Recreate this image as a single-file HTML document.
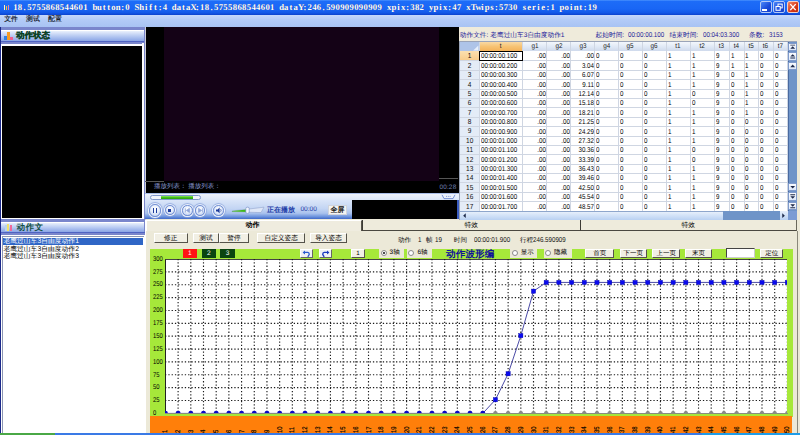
<!DOCTYPE html><html><head><meta charset="utf-8"><title>ui</title><style>
*{box-sizing:border-box;margin:0;padding:0}
html,body{width:800px;height:435px;overflow:hidden;background:#ece9d8}
body{font-family:"Liberation Sans",sans-serif;font-size:6.2px;color:#000;position:relative;text-rendering:geometricPrecision}
.a{position:absolute}
.t{position:absolute;white-space:nowrap;line-height:1}
.btn{position:absolute;background:#f1efe4;border:0.6px solid #fff;border-right-color:#55534a;border-bottom-color:#55534a;font-size:6.7px;text-align:center;white-space:nowrap;overflow:hidden}
.cell{position:absolute;white-space:nowrap;line-height:9.4px;height:9.4px;font-size:7px;color:#000;transform:scaleX(.885);transform-origin:0 0}
.cr{transform-origin:100% 0;text-align:right;padding-right:1.3px}
.rh{position:absolute;left:0;width:19.3px;text-align:center;line-height:9.6px;height:9.4px;font-size:7.2px;color:#111;transform:scaleX(.9)}
.ch{position:absolute;top:1px;height:9px;line-height:8.8px;text-align:center;font-size:7px;color:#222;transform:scaleX(.9)}
.radio{position:absolute;width:6px;height:6px;border-radius:50%;background:#fff;border:0.6px solid #8a8a8a}
</style></head><body>
<div class="a" style="left:0;top:0;width:800px;height:14.6px;background:linear-gradient(#4a92fd 0,#1d6cf8 10%,#1966f5 60%,#1258e8 85%,#0b42ce 100%)"></div>
<div class="a" style="left:4.2px;top:4.5px;width:1.2px;height:5.5px;background:#fff3c0"></div>
<div class="a" style="left:6px;top:5.5px;width:1.4px;height:4.5px;background:#f0c040"></div>
<div class="a" style="left:8.2px;top:4.5px;width:1.3px;height:5.5px;background:#f08898"></div>
<div class="a" style="left:13px;top:2.6px;height:9px;white-space:nowrap;font-family:'Liberation Serif',serif;font-weight:bold;font-size:8.8px;line-height:9px;color:#fff;text-shadow:0.4px 0.4px 0 #163c96"><span style="display:inline-block;width:4.68px;text-align:center">1</span><span style="display:inline-block;width:4.68px;text-align:center">8</span><span style="display:inline-block;width:4.68px;text-align:center">.</span><span style="display:inline-block;width:4.68px;text-align:center">5</span><span style="display:inline-block;width:4.68px;text-align:center">7</span><span style="display:inline-block;width:4.68px;text-align:center">5</span><span style="display:inline-block;width:4.68px;text-align:center">5</span><span style="display:inline-block;width:4.68px;text-align:center">8</span><span style="display:inline-block;width:4.68px;text-align:center">6</span><span style="display:inline-block;width:4.68px;text-align:center">8</span><span style="display:inline-block;width:4.68px;text-align:center">5</span><span style="display:inline-block;width:4.68px;text-align:center">4</span><span style="display:inline-block;width:4.68px;text-align:center">4</span><span style="display:inline-block;width:4.68px;text-align:center">6</span><span style="display:inline-block;width:4.68px;text-align:center">0</span><span style="display:inline-block;width:4.68px;text-align:center">1</span><span style="display:inline-block;width:4.68px;text-align:center">&nbsp;</span><span style="display:inline-block;width:4.68px;text-align:center">b</span><span style="display:inline-block;width:4.68px;text-align:center">u</span><span style="display:inline-block;width:4.68px;text-align:center">t</span><span style="display:inline-block;width:4.68px;text-align:center">t</span><span style="display:inline-block;width:4.68px;text-align:center">o</span><span style="display:inline-block;width:4.68px;text-align:center">n</span><span style="display:inline-block;width:4.68px;text-align:center">:</span><span style="display:inline-block;width:4.68px;text-align:center">0</span><span style="display:inline-block;width:4.68px;text-align:center">&nbsp;</span><span style="display:inline-block;width:4.68px;text-align:center">S</span><span style="display:inline-block;width:4.68px;text-align:center">h</span><span style="display:inline-block;width:4.68px;text-align:center">i</span><span style="display:inline-block;width:4.68px;text-align:center">f</span><span style="display:inline-block;width:4.68px;text-align:center">t</span><span style="display:inline-block;width:4.68px;text-align:center">:</span><span style="display:inline-block;width:4.68px;text-align:center">4</span><span style="display:inline-block;width:4.68px;text-align:center">&nbsp;</span><span style="display:inline-block;width:4.68px;text-align:center">d</span><span style="display:inline-block;width:4.68px;text-align:center">a</span><span style="display:inline-block;width:4.68px;text-align:center">t</span><span style="display:inline-block;width:4.68px;text-align:center">a</span><span style="display:inline-block;width:4.68px;text-align:center">X</span><span style="display:inline-block;width:4.68px;text-align:center">:</span><span style="display:inline-block;width:4.68px;text-align:center">1</span><span style="display:inline-block;width:4.68px;text-align:center">8</span><span style="display:inline-block;width:4.68px;text-align:center">.</span><span style="display:inline-block;width:4.68px;text-align:center">5</span><span style="display:inline-block;width:4.68px;text-align:center">7</span><span style="display:inline-block;width:4.68px;text-align:center">5</span><span style="display:inline-block;width:4.68px;text-align:center">5</span><span style="display:inline-block;width:4.68px;text-align:center">8</span><span style="display:inline-block;width:4.68px;text-align:center">6</span><span style="display:inline-block;width:4.68px;text-align:center">8</span><span style="display:inline-block;width:4.68px;text-align:center">5</span><span style="display:inline-block;width:4.68px;text-align:center">4</span><span style="display:inline-block;width:4.68px;text-align:center">4</span><span style="display:inline-block;width:4.68px;text-align:center">6</span><span style="display:inline-block;width:4.68px;text-align:center">0</span><span style="display:inline-block;width:4.68px;text-align:center">1</span><span style="display:inline-block;width:4.68px;text-align:center">&nbsp;</span><span style="display:inline-block;width:4.68px;text-align:center">d</span><span style="display:inline-block;width:4.68px;text-align:center">a</span><span style="display:inline-block;width:4.68px;text-align:center">t</span><span style="display:inline-block;width:4.68px;text-align:center">a</span><span style="display:inline-block;width:4.68px;text-align:center">Y</span><span style="display:inline-block;width:4.68px;text-align:center">:</span><span style="display:inline-block;width:4.68px;text-align:center">2</span><span style="display:inline-block;width:4.68px;text-align:center">4</span><span style="display:inline-block;width:4.68px;text-align:center">6</span><span style="display:inline-block;width:4.68px;text-align:center">.</span><span style="display:inline-block;width:4.68px;text-align:center">5</span><span style="display:inline-block;width:4.68px;text-align:center">9</span><span style="display:inline-block;width:4.68px;text-align:center">0</span><span style="display:inline-block;width:4.68px;text-align:center">9</span><span style="display:inline-block;width:4.68px;text-align:center">0</span><span style="display:inline-block;width:4.68px;text-align:center">9</span><span style="display:inline-block;width:4.68px;text-align:center">0</span><span style="display:inline-block;width:4.68px;text-align:center">9</span><span style="display:inline-block;width:4.68px;text-align:center">0</span><span style="display:inline-block;width:4.68px;text-align:center">9</span><span style="display:inline-block;width:4.68px;text-align:center">0</span><span style="display:inline-block;width:4.68px;text-align:center">9</span><span style="display:inline-block;width:4.68px;text-align:center">&nbsp;</span><span style="display:inline-block;width:4.68px;text-align:center">x</span><span style="display:inline-block;width:4.68px;text-align:center">p</span><span style="display:inline-block;width:4.68px;text-align:center">i</span><span style="display:inline-block;width:4.68px;text-align:center">x</span><span style="display:inline-block;width:4.68px;text-align:center">:</span><span style="display:inline-block;width:4.68px;text-align:center">3</span><span style="display:inline-block;width:4.68px;text-align:center">8</span><span style="display:inline-block;width:4.68px;text-align:center">2</span><span style="display:inline-block;width:4.68px;text-align:center">&nbsp;</span><span style="display:inline-block;width:4.68px;text-align:center">y</span><span style="display:inline-block;width:4.68px;text-align:center">p</span><span style="display:inline-block;width:4.68px;text-align:center">i</span><span style="display:inline-block;width:4.68px;text-align:center">x</span><span style="display:inline-block;width:4.68px;text-align:center">:</span><span style="display:inline-block;width:4.68px;text-align:center">4</span><span style="display:inline-block;width:4.68px;text-align:center">7</span><span style="display:inline-block;width:4.68px;text-align:center">&nbsp;</span><span style="display:inline-block;width:4.68px;text-align:center">x</span><span style="display:inline-block;width:4.68px;text-align:center">T</span><span style="display:inline-block;width:4.68px;text-align:center">w</span><span style="display:inline-block;width:4.68px;text-align:center">i</span><span style="display:inline-block;width:4.68px;text-align:center">p</span><span style="display:inline-block;width:4.68px;text-align:center">s</span><span style="display:inline-block;width:4.68px;text-align:center">:</span><span style="display:inline-block;width:4.68px;text-align:center">5</span><span style="display:inline-block;width:4.68px;text-align:center">7</span><span style="display:inline-block;width:4.68px;text-align:center">3</span><span style="display:inline-block;width:4.68px;text-align:center">0</span><span style="display:inline-block;width:4.68px;text-align:center">&nbsp;</span><span style="display:inline-block;width:4.68px;text-align:center">s</span><span style="display:inline-block;width:4.68px;text-align:center">e</span><span style="display:inline-block;width:4.68px;text-align:center">r</span><span style="display:inline-block;width:4.68px;text-align:center">i</span><span style="display:inline-block;width:4.68px;text-align:center">e</span><span style="display:inline-block;width:4.68px;text-align:center">:</span><span style="display:inline-block;width:4.68px;text-align:center">1</span><span style="display:inline-block;width:4.68px;text-align:center">&nbsp;</span><span style="display:inline-block;width:4.68px;text-align:center">p</span><span style="display:inline-block;width:4.68px;text-align:center">o</span><span style="display:inline-block;width:4.68px;text-align:center">i</span><span style="display:inline-block;width:4.68px;text-align:center">n</span><span style="display:inline-block;width:4.68px;text-align:center">t</span><span style="display:inline-block;width:4.68px;text-align:center">:</span><span style="display:inline-block;width:4.68px;text-align:center">1</span><span style="display:inline-block;width:4.68px;text-align:center">9</span></div>
<div class="a" style="left:759.5px;top:1.2px;width:12px;height:12.2px;border-radius:2px;border:0.7px solid #b4c9f6;background:linear-gradient(135deg,#4a86f8,#1848d8 60%,#1840c8)"></div>
<div class="a" style="left:773px;top:1.2px;width:12px;height:12.2px;border-radius:2px;border:0.7px solid #b4c9f6;background:linear-gradient(135deg,#4a86f8,#1848d8 60%,#1840c8)"></div>
<div class="a" style="left:787px;top:1.2px;width:12px;height:12.2px;border-radius:2px;border:0.7px solid #f3cfc6;background:linear-gradient(135deg,#f08868,#d83818 60%,#c02808)"></div>
<div class="a" style="left:762.2px;top:9px;width:4.6px;height:1.7px;background:#fff"></div>
<svg class="a" style="left:773px;top:1.2px" width="12" height="12.2" viewBox="0 0 12 12"><rect x="5" y="3" width="4.2" height="3.8" fill="none" stroke="#fff" stroke-width="1"/><rect x="3" y="5.4" width="4.2" height="3.8" fill="#2858e0" stroke="#fff" stroke-width="1"/></svg>
<svg class="a" style="left:787px;top:1.2px" width="12" height="12.2" viewBox="0 0 12 12"><path d="M3.3 3 L8.7 9 M8.7 3 L3.3 9" stroke="#fff" stroke-width="1.4"/></svg>
<div class="a" style="left:0;top:14.6px;width:800px;height:12.2px;background:linear-gradient(#c6d8fb,#b3cbf7 40%,#a8c3f3)"></div>
<div class="t" style="left:4.2px;top:17.3px;font-size:6.9px;color:#0a1020;-webkit-text-stroke:0.15px #0a1020">文件</div>
<div class="t" style="left:26px;top:17.3px;font-size:6.9px;color:#0a1020;-webkit-text-stroke:0.15px #0a1020">测试</div>
<div class="t" style="left:48px;top:17.3px;font-size:6.9px;color:#0a1020;-webkit-text-stroke:0.15px #0a1020">配置</div>
<div class="a" style="left:0;top:26.8px;width:145px;height:408px;background:#fff"></div>
<div class="a" style="left:0;top:26.8px;width:1px;height:408px;background:#1c2a8c"></div>
<div class="a" style="left:0.8px;top:27px;width:144.4px;height:16.7px;background:#7a86cc"></div>
<div class="a" style="left:1.4px;top:29.8px;width:142.6px;height:10.899999999999999px;background:linear-gradient(#ffffff 0,#ffffff 5%,#e4ecfb 14%,#bdcef3 50%,#99b1ea 85%,#8ba5e4 100%)"></div>
<div class="a" style="left:0.8px;top:40.7px;width:144.4px;height:1.3px;background:#4f63c2"></div>
<div class="a" style="left:4.3px;top:36.3px;width:2.6px;height:3.8px;background:#2f7fe6"></div>
<div class="a" style="left:7.2px;top:32.4px;width:2.8px;height:7.7px;background:#f59a22"></div>
<div class="a" style="left:10.3px;top:37px;width:2.4px;height:3.1px;background:#ee5f8e"></div>
<div class="t" style="left:16px;top:30.6px;font-weight:bold;font-size:8.5px;color:#0a4024;-webkit-text-stroke:0.2px #0a4024">动作状态</div>
<div class="a" style="left:2.4px;top:46.2px;width:139.8px;height:172.2px;background:#000"></div>
<div class="a" style="left:142.2px;top:43px;width:1.8px;height:178px;background:#fff"></div>
<div class="a" style="left:0.8px;top:219.4px;width:144.4px;height:15.6px;background:#7a86cc"></div>
<div class="a" style="left:1.4px;top:222.20000000000002px;width:142.6px;height:9.8px;background:linear-gradient(#ffffff 0,#ffffff 5%,#e4ecfb 14%,#bdcef3 50%,#99b1ea 85%,#8ba5e4 100%)"></div>
<div class="a" style="left:0.8px;top:232.0px;width:144.4px;height:1.3px;background:#4f63c2"></div>
<div class="a" style="left:5px;top:224.6px;width:2px;height:6.2px;background:#b9d4ee"></div>
<div class="a" style="left:7.2px;top:224.2px;width:2.2px;height:6.6px;background:#f2e26a"></div>
<div class="a" style="left:9.6px;top:224.6px;width:2.2px;height:6.2px;background:#ef6a9c"></div>
<div class="t" style="left:16.6px;top:222.6px;font-weight:bold;font-size:8.6px;color:#145048;letter-spacing:0.3px">动作文</div>
<div class="a" style="left:1.6px;top:236.2px;width:142.4px;height:0.8px;background:#8c96b4"></div>
<div class="a" style="left:1.6px;top:236.2px;width:0.8px;height:197px;background:#8c96b4"></div>
<div class="a" style="left:2.8px;top:237.8px;width:140.2px;height:6.8px;background:#2f66c6"></div>
<div class="t" style="left:3.4px;top:239.4px;font-size:6.8px;color:#fff">老鹰过山车3自由度动作1</div>
<div class="t" style="left:3.4px;top:246.65px;font-size:6.8px;color:#000">老鹰过山车3自由度动作2</div>
<div class="t" style="left:3.4px;top:253.9px;font-size:6.8px;color:#000">老鹰过山车3自由度动作3</div>
<div class="a" style="left:144.5px;top:219.6px;width:1px;height:214px;background:#9494a6"></div>
<div class="a" style="left:144px;top:27px;width:1.2px;height:192.6px;background:#7a86cc"></div>
<div class="a" style="left:145.2px;top:27px;width:0.8px;height:192.6px;background:#c9ccd8"></div>
<div class="a" style="left:146px;top:26.8px;width:313.2px;height:166.6px;background:#000"></div>
<div class="a" style="left:164px;top:27.2px;width:275.4px;height:154px;background:#140216"></div>
<div class="a" style="left:145.4px;top:180.8px;width:18.6px;height:0.8px;background:#555"></div>
<div class="a" style="left:439.4px;top:177.8px;width:19px;height:0.8px;background:#555"></div>
<div class="t" style="left:154px;top:184.4px;font-size:6.5px;color:#8c9cd6">播放列表： 播放列表：</div>
<div class="t" style="left:439.4px;top:184.6px;font-size:6.4px;color:#7080b4;letter-spacing:0.2px">00:28</div>
<div class="a" style="left:145.4px;top:193.4px;width:314.2px;height:26px;background:linear-gradient(#7f9ddc 0,#eef3fc 5%,#d8e4f8 30%,#c3d5f3 60%,#a9c2ed 78%,#6c93dd 91%,#3f68c8 100%)"></div>
<div class="a" style="left:149.6px;top:195px;width:51.8px;height:4.8px;border-radius:2.4px;background:#f2f5fc;border:0.6px solid #7f96cc"></div>
<div class="a" style="left:161px;top:195.5px;width:32px;height:3.8px;background:linear-gradient(#8ae85a,#33b812 60%,#2aa00c)"></div>
<div class="a" style="left:148.7px;top:204.2px;width:12.6px;height:12.6px;border-radius:50%;background:radial-gradient(circle at 50% 35%,#ffffff 0,#e6eefb 45%,#b8caee 100%);border:0.7px solid #7390d4;box-shadow:0 0 0 1.1px #eaf0fb,0 0 0.8px 1.7px #89a3dc"></div>
<div class="a" style="left:164.6px;top:205.4px;width:10px;height:10px;border-radius:50%;background:radial-gradient(circle at 50% 35%,#ffffff 0,#e6eefb 45%,#b8caee 100%);border:0.7px solid #7390d4;box-shadow:0 0 0 1.1px #eaf0fb,0 0 0.8px 1.7px #89a3dc"></div>
<div class="a" style="left:182.1px;top:205.1px;width:10.6px;height:10.6px;border-radius:50%;background:radial-gradient(circle at 50% 35%,#ffffff 0,#e6eefb 45%,#b8caee 100%);border:0.7px solid #7390d4;box-shadow:0 0 0 1.1px #eaf0fb,0 0 0.8px 1.7px #89a3dc"></div>
<div class="a" style="left:194.7px;top:205.1px;width:10.6px;height:10.6px;border-radius:50%;background:radial-gradient(circle at 50% 35%,#ffffff 0,#e6eefb 45%,#b8caee 100%);border:0.7px solid #7390d4;box-shadow:0 0 0 1.1px #eaf0fb,0 0 0.8px 1.7px #89a3dc"></div>
<div class="a" style="left:212.9px;top:204.9px;width:11.0px;height:11.0px;border-radius:50%;background:radial-gradient(circle at 50% 35%,#ffffff 0,#e6eefb 45%,#b8caee 100%);border:0.7px solid #7390d4;box-shadow:0 0 0 1.1px #eaf0fb,0 0 0.8px 1.7px #89a3dc"></div>
<div class="a" style="left:153.2px;top:207.8px;width:1.3px;height:5.2px;background:#1d3c9c"></div>
<div class="a" style="left:155.6px;top:207.8px;width:1.3px;height:5.2px;background:#1d3c9c"></div>
<div class="a" style="left:168px;top:208.8px;width:3.2px;height:3.2px;background:#1d3c9c"></div>
<svg class="a" style="left:182px;top:205px" width="24" height="11" viewBox="0 0 24 11"><path d="M3.4 3.4v4M7.4 3.4l-3 2 3 2z M20.6 3.4v4M16.6 3.4l3 2-3 2z" fill="#8ea4d8" stroke="#8ea4d8" stroke-width="0.8"/></svg>
<svg class="a" style="left:213px;top:205px" width="11" height="11" viewBox="0 0 11 11"><path d="M3 4.4h1.6l2-1.8v5.6l-2-1.8H3z" fill="#1d3c9c"/><path d="M7.6 4.2q1 1.2 0 2.4" stroke="#1d3c9c" stroke-width="0.7" fill="none"/></svg>
<svg class="a" style="left:231px;top:204px" width="36" height="12" viewBox="0 0 36 12"><path d="M1 7 L33 3.2 L30 8.6 L1 7.6z" fill="#dfe7f7" stroke="#8a9cc8" stroke-width="0.5"/><path d="M1 7 L16 5.4 L16 7.9 L1 7.6z" fill="#3fb81c"/><rect x="14.8" y="3.2" width="3.4" height="6.2" rx="1.4" fill="#f4f7fd" stroke="#6a84c4" stroke-width="0.6"/></svg>
<div class="t" style="left:267px;top:206.8px;font-size:7px;color:#1a3aa6;font-weight:bold">正在播放</div>
<div class="t" style="left:300.4px;top:207.2px;font-size:6.6px;color:#1a3aa6">00:00</div>
<div class="a" style="left:328px;top:205px;width:19.4px;height:10.2px;background:#f3f3f1;border:0.5px solid #d0d4dc"></div>
<div class="t" style="left:330.6px;top:206.6px;font-size:7px;font-weight:bold;color:#111">全屏</div>
<div class="a" style="left:351.6px;top:200px;width:105.8px;height:19.2px;background:#000"></div>
<div class="a" style="left:457.4px;top:200px;width:2.2px;height:19.4px;background:#3a5cc0"></div>
<svg class="a" style="left:441px;top:194.4px" width="15" height="6" viewBox="0 0 15 6"><path d="M1 0.8 L3 4.6 L12 4.6 L14 0.8" fill="#eaf0fb" stroke="#5a78c8" stroke-width="0.8"/><path d="M5 2.4h5" stroke="#5a78c8" stroke-width="0.7" stroke-dasharray="1 0.8"/></svg>
<div class="a" style="left:459.4px;top:26.8px;width:340.6px;height:15px;background:#efebdb"></div>
<div class="t" style="left:459.8px;top:32.6px;font-size:6.7px;color:#1a1a9a">动作文件: 老鹰过山车3自由度动作1</div>
<div class="t" style="left:595.6px;top:32.6px;font-size:6.7px;color:#1a1a9a">起始时间:</div>
<div class="t" style="left:628px;top:32.4px;font-size:7px;transform:scaleX(.885);transform-origin:0 0;color:#1a1a9a">00:00:00.100</div>
<div class="t" style="left:669.6px;top:32.6px;font-size:6.7px;color:#1a1a9a">结束时间:</div>
<div class="t" style="left:702.6px;top:32.4px;font-size:7px;transform:scaleX(.885);transform-origin:0 0;color:#1a1a9a">00:04:03.300</div>
<div class="t" style="left:749px;top:32.6px;font-size:6.7px;color:#1a1a9a">条数:</div>
<div class="t" style="left:769px;top:32.4px;font-size:7px;transform:scaleX(.885);transform-origin:0 0;color:#1a1a9a">3153</div>
<div class="a" style="left:459.2px;top:41.2px;width:338px;height:178.4px;background:#fff;overflow:hidden;border-left:0.6px solid #9aa4b8;border-top:0.6px solid #9aa4b8">
<div class="a" style="left:0;top:0;width:327.6px;height:9.2px;background:linear-gradient(#f3f7fc,#dfe8f5 55%,#cfdaec)"></div>
<div class="a" style="left:0;top:0;width:19.3px;height:9.2px;background:#aec4e8"></div>
<svg class="a" style="left:12px;top:2.4px" width="7" height="6" viewBox="0 0 7 6"><path d="M6.4 0.4V5.6H1.2z" fill="#e8f0fb"/></svg>
<div class="a" style="left:19.3px;top:0;width:43.1px;height:9.2px;background:linear-gradient(#f9d9a4,#f7c373 50%,#f4b25a)"></div>
<div class="ch" style="left:19.3px;width:43.1px">t</div>
<div class="ch" style="left:62.4px;width:24.0px">g1</div>
<div class="ch" style="left:86.4px;width:24.0px">g2</div>
<div class="ch" style="left:110.4px;width:24.1px">g3</div>
<div class="ch" style="left:134.5px;width:23.7px">g4</div>
<div class="ch" style="left:158.2px;width:23.8px">g5</div>
<div class="ch" style="left:182px;width:24px">g6</div>
<div class="ch" style="left:206px;width:23.8px">t1</div>
<div class="ch" style="left:229.8px;width:24.3px">t2</div>
<div class="ch" style="left:254.1px;width:14.9px">t3</div>
<div class="ch" style="left:269px;width:14.7px">t4</div>
<div class="ch" style="left:283.7px;width:14.4px">t5</div>
<div class="ch" style="left:298.1px;width:14.7px">t6</div>
<div class="ch" style="left:312.8px;width:14.8px">t7</div>
<div class="a" style="left:0;top:9.2px;width:19.3px;height:159.545px;background:#e4ecf7"></div>
<div class="a" style="left:0;top:9.2px;width:19.3px;height:9.385px;background:linear-gradient(#fbe0b0,#f8cb88)"></div>
<div class="rh" style="top:9.2px">1</div>
<div class="cell" style="left:20.7px;top:10.3px">00:00:00.100</div>
<div class="cell cr" style="left:62.4px;width:24.0px;top:10.3px">.00</div>
<div class="cell cr" style="left:86.4px;width:24.0px;top:10.3px">.00</div>
<div class="cell cr" style="left:110.4px;width:24.1px;top:10.3px">.00</div>
<div class="cell" style="left:136.1px;top:10.3px">0</div>
<div class="cell" style="left:159.79999999999998px;top:10.3px">0</div>
<div class="cell" style="left:183.6px;top:10.3px">0</div>
<div class="cell" style="left:207.6px;top:10.3px">1</div>
<div class="cell" style="left:231.4px;top:10.3px">1</div>
<div class="cell" style="left:255.7px;top:10.3px">9</div>
<div class="cell" style="left:270.6px;top:10.3px">1</div>
<div class="cell" style="left:285.3px;top:10.3px">1</div>
<div class="cell" style="left:299.70000000000005px;top:10.3px">0</div>
<div class="cell" style="left:314.40000000000003px;top:10.3px">0</div>
<div class="rh" style="top:18.59px">2</div>
<div class="cell" style="left:20.7px;top:19.69px">00:00:00.200</div>
<div class="cell cr" style="left:62.4px;width:24.0px;top:19.69px">.00</div>
<div class="cell cr" style="left:86.4px;width:24.0px;top:19.69px">.00</div>
<div class="cell cr" style="left:110.4px;width:24.1px;top:19.69px">3.04</div>
<div class="cell" style="left:136.1px;top:19.69px">0</div>
<div class="cell" style="left:159.79999999999998px;top:19.69px">0</div>
<div class="cell" style="left:183.6px;top:19.69px">0</div>
<div class="cell" style="left:207.6px;top:19.69px">1</div>
<div class="cell" style="left:231.4px;top:19.69px">1</div>
<div class="cell" style="left:255.7px;top:19.69px">9</div>
<div class="cell" style="left:270.6px;top:19.69px">1</div>
<div class="cell" style="left:285.3px;top:19.69px">1</div>
<div class="cell" style="left:299.70000000000005px;top:19.69px">0</div>
<div class="cell" style="left:314.40000000000003px;top:19.69px">0</div>
<div class="rh" style="top:27.97px">3</div>
<div class="cell" style="left:20.7px;top:29.07px">00:00:00.300</div>
<div class="cell cr" style="left:62.4px;width:24.0px;top:29.07px">.00</div>
<div class="cell cr" style="left:86.4px;width:24.0px;top:29.07px">.00</div>
<div class="cell cr" style="left:110.4px;width:24.1px;top:29.07px">6.07</div>
<div class="cell" style="left:136.1px;top:29.07px">0</div>
<div class="cell" style="left:159.79999999999998px;top:29.07px">0</div>
<div class="cell" style="left:183.6px;top:29.07px">0</div>
<div class="cell" style="left:207.6px;top:29.07px">1</div>
<div class="cell" style="left:231.4px;top:29.07px">1</div>
<div class="cell" style="left:255.7px;top:29.07px">9</div>
<div class="cell" style="left:270.6px;top:29.07px">0</div>
<div class="cell" style="left:285.3px;top:29.07px">1</div>
<div class="cell" style="left:299.70000000000005px;top:29.07px">0</div>
<div class="cell" style="left:314.40000000000003px;top:29.07px">0</div>
<div class="rh" style="top:37.36px">4</div>
<div class="cell" style="left:20.7px;top:38.46px">00:00:00.400</div>
<div class="cell cr" style="left:62.4px;width:24.0px;top:38.46px">.00</div>
<div class="cell cr" style="left:86.4px;width:24.0px;top:38.46px">.00</div>
<div class="cell cr" style="left:110.4px;width:24.1px;top:38.46px">9.11</div>
<div class="cell" style="left:136.1px;top:38.46px">0</div>
<div class="cell" style="left:159.79999999999998px;top:38.46px">0</div>
<div class="cell" style="left:183.6px;top:38.46px">0</div>
<div class="cell" style="left:207.6px;top:38.46px">1</div>
<div class="cell" style="left:231.4px;top:38.46px">1</div>
<div class="cell" style="left:255.7px;top:38.46px">9</div>
<div class="cell" style="left:270.6px;top:38.46px">0</div>
<div class="cell" style="left:285.3px;top:38.46px">1</div>
<div class="cell" style="left:299.70000000000005px;top:38.46px">0</div>
<div class="cell" style="left:314.40000000000003px;top:38.46px">0</div>
<div class="rh" style="top:46.74px">5</div>
<div class="cell" style="left:20.7px;top:47.84px">00:00:00.500</div>
<div class="cell cr" style="left:62.4px;width:24.0px;top:47.84px">.00</div>
<div class="cell cr" style="left:86.4px;width:24.0px;top:47.84px">.00</div>
<div class="cell cr" style="left:110.4px;width:24.1px;top:47.84px">12.14</div>
<div class="cell" style="left:136.1px;top:47.84px">0</div>
<div class="cell" style="left:159.79999999999998px;top:47.84px">0</div>
<div class="cell" style="left:183.6px;top:47.84px">0</div>
<div class="cell" style="left:207.6px;top:47.84px">1</div>
<div class="cell" style="left:231.4px;top:47.84px">0</div>
<div class="cell" style="left:255.7px;top:47.84px">9</div>
<div class="cell" style="left:270.6px;top:47.84px">0</div>
<div class="cell" style="left:285.3px;top:47.84px">1</div>
<div class="cell" style="left:299.70000000000005px;top:47.84px">0</div>
<div class="cell" style="left:314.40000000000003px;top:47.84px">0</div>
<div class="rh" style="top:56.12px">6</div>
<div class="cell" style="left:20.7px;top:57.22px">00:00:00.600</div>
<div class="cell cr" style="left:62.4px;width:24.0px;top:57.22px">.00</div>
<div class="cell cr" style="left:86.4px;width:24.0px;top:57.22px">.00</div>
<div class="cell cr" style="left:110.4px;width:24.1px;top:57.22px">15.18</div>
<div class="cell" style="left:136.1px;top:57.22px">0</div>
<div class="cell" style="left:159.79999999999998px;top:57.22px">0</div>
<div class="cell" style="left:183.6px;top:57.22px">0</div>
<div class="cell" style="left:207.6px;top:57.22px">1</div>
<div class="cell" style="left:231.4px;top:57.22px">0</div>
<div class="cell" style="left:255.7px;top:57.22px">9</div>
<div class="cell" style="left:270.6px;top:57.22px">0</div>
<div class="cell" style="left:285.3px;top:57.22px">1</div>
<div class="cell" style="left:299.70000000000005px;top:57.22px">0</div>
<div class="cell" style="left:314.40000000000003px;top:57.22px">0</div>
<div class="rh" style="top:65.51px">7</div>
<div class="cell" style="left:20.7px;top:66.61px">00:00:00.700</div>
<div class="cell cr" style="left:62.4px;width:24.0px;top:66.61px">.00</div>
<div class="cell cr" style="left:86.4px;width:24.0px;top:66.61px">.00</div>
<div class="cell cr" style="left:110.4px;width:24.1px;top:66.61px">18.21</div>
<div class="cell" style="left:136.1px;top:66.61px">0</div>
<div class="cell" style="left:159.79999999999998px;top:66.61px">0</div>
<div class="cell" style="left:183.6px;top:66.61px">0</div>
<div class="cell" style="left:207.6px;top:66.61px">1</div>
<div class="cell" style="left:231.4px;top:66.61px">1</div>
<div class="cell" style="left:255.7px;top:66.61px">9</div>
<div class="cell" style="left:270.6px;top:66.61px">0</div>
<div class="cell" style="left:285.3px;top:66.61px">1</div>
<div class="cell" style="left:299.70000000000005px;top:66.61px">0</div>
<div class="cell" style="left:314.40000000000003px;top:66.61px">0</div>
<div class="rh" style="top:74.89px">8</div>
<div class="cell" style="left:20.7px;top:75.99px">00:00:00.800</div>
<div class="cell cr" style="left:62.4px;width:24.0px;top:75.99px">.00</div>
<div class="cell cr" style="left:86.4px;width:24.0px;top:75.99px">.00</div>
<div class="cell cr" style="left:110.4px;width:24.1px;top:75.99px">21.25</div>
<div class="cell" style="left:136.1px;top:75.99px">0</div>
<div class="cell" style="left:159.79999999999998px;top:75.99px">0</div>
<div class="cell" style="left:183.6px;top:75.99px">0</div>
<div class="cell" style="left:207.6px;top:75.99px">1</div>
<div class="cell" style="left:231.4px;top:75.99px">1</div>
<div class="cell" style="left:255.7px;top:75.99px">9</div>
<div class="cell" style="left:270.6px;top:75.99px">0</div>
<div class="cell" style="left:285.3px;top:75.99px">0</div>
<div class="cell" style="left:299.70000000000005px;top:75.99px">0</div>
<div class="cell" style="left:314.40000000000003px;top:75.99px">0</div>
<div class="rh" style="top:84.28px">9</div>
<div class="cell" style="left:20.7px;top:85.38px">00:00:00.900</div>
<div class="cell cr" style="left:62.4px;width:24.0px;top:85.38px">.00</div>
<div class="cell cr" style="left:86.4px;width:24.0px;top:85.38px">.00</div>
<div class="cell cr" style="left:110.4px;width:24.1px;top:85.38px">24.29</div>
<div class="cell" style="left:136.1px;top:85.38px">0</div>
<div class="cell" style="left:159.79999999999998px;top:85.38px">0</div>
<div class="cell" style="left:183.6px;top:85.38px">0</div>
<div class="cell" style="left:207.6px;top:85.38px">1</div>
<div class="cell" style="left:231.4px;top:85.38px">1</div>
<div class="cell" style="left:255.7px;top:85.38px">9</div>
<div class="cell" style="left:270.6px;top:85.38px">0</div>
<div class="cell" style="left:285.3px;top:85.38px">0</div>
<div class="cell" style="left:299.70000000000005px;top:85.38px">0</div>
<div class="cell" style="left:314.40000000000003px;top:85.38px">0</div>
<div class="rh" style="top:93.67px">10</div>
<div class="cell" style="left:20.7px;top:94.77px">00:00:01.000</div>
<div class="cell cr" style="left:62.4px;width:24.0px;top:94.77px">.00</div>
<div class="cell cr" style="left:86.4px;width:24.0px;top:94.77px">.00</div>
<div class="cell cr" style="left:110.4px;width:24.1px;top:94.77px">27.32</div>
<div class="cell" style="left:136.1px;top:94.77px">0</div>
<div class="cell" style="left:159.79999999999998px;top:94.77px">0</div>
<div class="cell" style="left:183.6px;top:94.77px">0</div>
<div class="cell" style="left:207.6px;top:94.77px">1</div>
<div class="cell" style="left:231.4px;top:94.77px">1</div>
<div class="cell" style="left:255.7px;top:94.77px">9</div>
<div class="cell" style="left:270.6px;top:94.77px">0</div>
<div class="cell" style="left:285.3px;top:94.77px">0</div>
<div class="cell" style="left:299.70000000000005px;top:94.77px">0</div>
<div class="cell" style="left:314.40000000000003px;top:94.77px">0</div>
<div class="rh" style="top:103.05px">11</div>
<div class="cell" style="left:20.7px;top:104.15px">00:00:01.100</div>
<div class="cell cr" style="left:62.4px;width:24.0px;top:104.15px">.00</div>
<div class="cell cr" style="left:86.4px;width:24.0px;top:104.15px">.00</div>
<div class="cell cr" style="left:110.4px;width:24.1px;top:104.15px">30.36</div>
<div class="cell" style="left:136.1px;top:104.15px">0</div>
<div class="cell" style="left:159.79999999999998px;top:104.15px">0</div>
<div class="cell" style="left:183.6px;top:104.15px">0</div>
<div class="cell" style="left:207.6px;top:104.15px">1</div>
<div class="cell" style="left:231.4px;top:104.15px">0</div>
<div class="cell" style="left:255.7px;top:104.15px">9</div>
<div class="cell" style="left:270.6px;top:104.15px">0</div>
<div class="cell" style="left:285.3px;top:104.15px">0</div>
<div class="cell" style="left:299.70000000000005px;top:104.15px">0</div>
<div class="cell" style="left:314.40000000000003px;top:104.15px">0</div>
<div class="rh" style="top:112.44px">12</div>
<div class="cell" style="left:20.7px;top:113.54px">00:00:01.200</div>
<div class="cell cr" style="left:62.4px;width:24.0px;top:113.54px">.00</div>
<div class="cell cr" style="left:86.4px;width:24.0px;top:113.54px">.00</div>
<div class="cell cr" style="left:110.4px;width:24.1px;top:113.54px">33.39</div>
<div class="cell" style="left:136.1px;top:113.54px">0</div>
<div class="cell" style="left:159.79999999999998px;top:113.54px">0</div>
<div class="cell" style="left:183.6px;top:113.54px">0</div>
<div class="cell" style="left:207.6px;top:113.54px">1</div>
<div class="cell" style="left:231.4px;top:113.54px">0</div>
<div class="cell" style="left:255.7px;top:113.54px">9</div>
<div class="cell" style="left:270.6px;top:113.54px">0</div>
<div class="cell" style="left:285.3px;top:113.54px">0</div>
<div class="cell" style="left:299.70000000000005px;top:113.54px">0</div>
<div class="cell" style="left:314.40000000000003px;top:113.54px">0</div>
<div class="rh" style="top:121.82px">13</div>
<div class="cell" style="left:20.7px;top:122.92px">00:00:01.300</div>
<div class="cell cr" style="left:62.4px;width:24.0px;top:122.92px">.00</div>
<div class="cell cr" style="left:86.4px;width:24.0px;top:122.92px">.00</div>
<div class="cell cr" style="left:110.4px;width:24.1px;top:122.92px">36.43</div>
<div class="cell" style="left:136.1px;top:122.92px">0</div>
<div class="cell" style="left:159.79999999999998px;top:122.92px">0</div>
<div class="cell" style="left:183.6px;top:122.92px">0</div>
<div class="cell" style="left:207.6px;top:122.92px">1</div>
<div class="cell" style="left:231.4px;top:122.92px">1</div>
<div class="cell" style="left:255.7px;top:122.92px">9</div>
<div class="cell" style="left:270.6px;top:122.92px">0</div>
<div class="cell" style="left:285.3px;top:122.92px">0</div>
<div class="cell" style="left:299.70000000000005px;top:122.92px">0</div>
<div class="cell" style="left:314.40000000000003px;top:122.92px">0</div>
<div class="rh" style="top:131.2px">14</div>
<div class="cell" style="left:20.7px;top:132.3px">00:00:01.400</div>
<div class="cell cr" style="left:62.4px;width:24.0px;top:132.3px">.00</div>
<div class="cell cr" style="left:86.4px;width:24.0px;top:132.3px">.00</div>
<div class="cell cr" style="left:110.4px;width:24.1px;top:132.3px">39.46</div>
<div class="cell" style="left:136.1px;top:132.3px">0</div>
<div class="cell" style="left:159.79999999999998px;top:132.3px">0</div>
<div class="cell" style="left:183.6px;top:132.3px">0</div>
<div class="cell" style="left:207.6px;top:132.3px">1</div>
<div class="cell" style="left:231.4px;top:132.3px">1</div>
<div class="cell" style="left:255.7px;top:132.3px">9</div>
<div class="cell" style="left:270.6px;top:132.3px">0</div>
<div class="cell" style="left:285.3px;top:132.3px">0</div>
<div class="cell" style="left:299.70000000000005px;top:132.3px">0</div>
<div class="cell" style="left:314.40000000000003px;top:132.3px">0</div>
<div class="rh" style="top:140.59px">15</div>
<div class="cell" style="left:20.7px;top:141.69px">00:00:01.500</div>
<div class="cell cr" style="left:62.4px;width:24.0px;top:141.69px">.00</div>
<div class="cell cr" style="left:86.4px;width:24.0px;top:141.69px">.00</div>
<div class="cell cr" style="left:110.4px;width:24.1px;top:141.69px">42.50</div>
<div class="cell" style="left:136.1px;top:141.69px">0</div>
<div class="cell" style="left:159.79999999999998px;top:141.69px">0</div>
<div class="cell" style="left:183.6px;top:141.69px">0</div>
<div class="cell" style="left:207.6px;top:141.69px">1</div>
<div class="cell" style="left:231.4px;top:141.69px">1</div>
<div class="cell" style="left:255.7px;top:141.69px">9</div>
<div class="cell" style="left:270.6px;top:141.69px">0</div>
<div class="cell" style="left:285.3px;top:141.69px">0</div>
<div class="cell" style="left:299.70000000000005px;top:141.69px">0</div>
<div class="cell" style="left:314.40000000000003px;top:141.69px">0</div>
<div class="rh" style="top:149.97px">16</div>
<div class="cell" style="left:20.7px;top:151.07px">00:00:01.600</div>
<div class="cell cr" style="left:62.4px;width:24.0px;top:151.07px">.00</div>
<div class="cell cr" style="left:86.4px;width:24.0px;top:151.07px">.00</div>
<div class="cell cr" style="left:110.4px;width:24.1px;top:151.07px">45.54</div>
<div class="cell" style="left:136.1px;top:151.07px">0</div>
<div class="cell" style="left:159.79999999999998px;top:151.07px">0</div>
<div class="cell" style="left:183.6px;top:151.07px">0</div>
<div class="cell" style="left:207.6px;top:151.07px">1</div>
<div class="cell" style="left:231.4px;top:151.07px">1</div>
<div class="cell" style="left:255.7px;top:151.07px">9</div>
<div class="cell" style="left:270.6px;top:151.07px">0</div>
<div class="cell" style="left:285.3px;top:151.07px">0</div>
<div class="cell" style="left:299.70000000000005px;top:151.07px">0</div>
<div class="cell" style="left:314.40000000000003px;top:151.07px">0</div>
<div class="rh" style="top:159.36px">17</div>
<div class="cell" style="left:20.7px;top:160.46px">00:00:01.700</div>
<div class="cell cr" style="left:62.4px;width:24.0px;top:160.46px">.00</div>
<div class="cell cr" style="left:86.4px;width:24.0px;top:160.46px">.00</div>
<div class="cell cr" style="left:110.4px;width:24.1px;top:160.46px">48.57</div>
<div class="cell" style="left:136.1px;top:160.46px">0</div>
<div class="cell" style="left:159.79999999999998px;top:160.46px">0</div>
<div class="cell" style="left:183.6px;top:160.46px">0</div>
<div class="cell" style="left:207.6px;top:160.46px">1</div>
<div class="cell" style="left:231.4px;top:160.46px">1</div>
<div class="cell" style="left:255.7px;top:160.46px">9</div>
<div class="cell" style="left:270.6px;top:160.46px">0</div>
<div class="cell" style="left:285.3px;top:160.46px">0</div>
<div class="cell" style="left:299.70000000000005px;top:160.46px">0</div>
<div class="cell" style="left:314.40000000000003px;top:160.46px">0</div>
<div class="a" style="left:0;top:18.29px;width:327.6px;height:0.6px;background:#cfd6e2"></div>
<div class="a" style="left:0;top:27.67px;width:327.6px;height:0.6px;background:#cfd6e2"></div>
<div class="a" style="left:0;top:37.06px;width:327.6px;height:0.6px;background:#cfd6e2"></div>
<div class="a" style="left:0;top:46.44px;width:327.6px;height:0.6px;background:#cfd6e2"></div>
<div class="a" style="left:0;top:55.83px;width:327.6px;height:0.6px;background:#cfd6e2"></div>
<div class="a" style="left:0;top:65.21px;width:327.6px;height:0.6px;background:#cfd6e2"></div>
<div class="a" style="left:0;top:74.59px;width:327.6px;height:0.6px;background:#cfd6e2"></div>
<div class="a" style="left:0;top:83.98px;width:327.6px;height:0.6px;background:#cfd6e2"></div>
<div class="a" style="left:0;top:93.37px;width:327.6px;height:0.6px;background:#cfd6e2"></div>
<div class="a" style="left:0;top:102.75px;width:327.6px;height:0.6px;background:#cfd6e2"></div>
<div class="a" style="left:0;top:112.14px;width:327.6px;height:0.6px;background:#cfd6e2"></div>
<div class="a" style="left:0;top:121.52px;width:327.6px;height:0.6px;background:#cfd6e2"></div>
<div class="a" style="left:0;top:130.9px;width:327.6px;height:0.6px;background:#cfd6e2"></div>
<div class="a" style="left:0;top:140.29px;width:327.6px;height:0.6px;background:#cfd6e2"></div>
<div class="a" style="left:0;top:149.67px;width:327.6px;height:0.6px;background:#cfd6e2"></div>
<div class="a" style="left:0;top:159.06px;width:327.6px;height:0.6px;background:#cfd6e2"></div>
<div class="a" style="left:0;top:168.44px;width:327.6px;height:0.6px;background:#cfd6e2"></div>
<div class="a" style="left:0;top:177.83px;width:327.6px;height:0.6px;background:#cfd6e2"></div>
<div class="a" style="left:19.0px;top:0;width:0.6px;height:168.74499999999998px;background:#cfd6e2"></div>
<div class="a" style="left:62.1px;top:0;width:0.6px;height:168.74499999999998px;background:#cfd6e2"></div>
<div class="a" style="left:86.1px;top:0;width:0.6px;height:168.74499999999998px;background:#cfd6e2"></div>
<div class="a" style="left:110.1px;top:0;width:0.6px;height:168.74499999999998px;background:#cfd6e2"></div>
<div class="a" style="left:134.2px;top:0;width:0.6px;height:168.74499999999998px;background:#cfd6e2"></div>
<div class="a" style="left:157.9px;top:0;width:0.6px;height:168.74499999999998px;background:#cfd6e2"></div>
<div class="a" style="left:181.7px;top:0;width:0.6px;height:168.74499999999998px;background:#cfd6e2"></div>
<div class="a" style="left:205.7px;top:0;width:0.6px;height:168.74499999999998px;background:#cfd6e2"></div>
<div class="a" style="left:229.5px;top:0;width:0.6px;height:168.74499999999998px;background:#cfd6e2"></div>
<div class="a" style="left:253.8px;top:0;width:0.6px;height:168.74499999999998px;background:#cfd6e2"></div>
<div class="a" style="left:268.7px;top:0;width:0.6px;height:168.74499999999998px;background:#cfd6e2"></div>
<div class="a" style="left:283.4px;top:0;width:0.6px;height:168.74499999999998px;background:#cfd6e2"></div>
<div class="a" style="left:297.8px;top:0;width:0.6px;height:168.74499999999998px;background:#cfd6e2"></div>
<div class="a" style="left:312.5px;top:0;width:0.6px;height:168.74499999999998px;background:#cfd6e2"></div>
<div class="a" style="left:327.3px;top:0;width:0.6px;height:168.74499999999998px;background:#cfd6e2"></div>
<div class="a" style="left:19.3px;top:9.2px;width:43.3px;height:9.584999999999999px;border:0.9px solid #000"></div>
<div class="a" style="left:327.6px;top:0;width:10.4px;height:168.74499999999998px;background:#6f94c8;border-left:0.5px solid #4a6aa0;border-right:0.8px solid #2a3a5a"></div>
<div class="a" style="left:328.1px;top:0.5px;width:9.2px;height:8.4px;background:linear-gradient(#fafcff,#dde8f9);border:0.5px solid #7f9acb;border-radius:0.8px"></div>
<svg class="a" style="left:0;top:0;overflow:visible" width="1" height="1"><path d="M330.30000000000007 2.7 h4.8 v0.9 h-4.8z M332.70000000000005 4.3 l2.4 2.4 h-4.8z" fill="#1e2a4a"/></svg>
<div class="a" style="left:328.1px;top:10px;width:9.2px;height:8.4px;background:linear-gradient(#fafcff,#dde8f9);border:0.5px solid #7f9acb;border-radius:0.8px"></div>
<svg class="a" style="left:0;top:0;overflow:visible" width="1" height="1"><path d="M332.70000000000005 12.2 l2.4 2.4 h-4.8z M330.30000000000007 15.4 h4.8 v1 h-4.8z" fill="#1e2a4a"/></svg>
<div class="a" style="left:328.1px;top:19.4px;width:9.2px;height:8.4px;background:linear-gradient(#fafcff,#dde8f9);border:0.5px solid #7f9acb;border-radius:0.8px"></div>
<svg class="a" style="left:0;top:0;overflow:visible" width="1" height="1"><path d="M332.70000000000005 22.599999999999998 l2.4 2.6 h-4.8z" fill="#1e2a4a"/></svg>
<div class="a" style="left:328.1px;top:140.545px;width:9.2px;height:8.4px;background:linear-gradient(#fafcff,#dde8f9);border:0.5px solid #7f9acb;border-radius:0.8px"></div>
<svg class="a" style="left:0;top:0;overflow:visible" width="1" height="1"><path d="M332.70000000000005 146.545 l2.4 -2.6 h-4.8z" fill="#1e2a4a"/></svg>
<div class="a" style="left:328.1px;top:149.94499999999996px;width:9.2px;height:8.4px;background:linear-gradient(#fafcff,#dde8f9);border:0.5px solid #7f9acb;border-radius:0.8px"></div>
<svg class="a" style="left:0;top:0;overflow:visible" width="1" height="1"><path d="M332.70000000000005 156.74499999999998 l2.4 -2.4 h-4.8z M330.30000000000007 152.34499999999997 h4.8 v1 h-4.8z" fill="#1e2a4a"/></svg>
<div class="a" style="left:328.1px;top:159.34499999999997px;width:9.2px;height:8.4px;background:linear-gradient(#fafcff,#dde8f9);border:0.5px solid #7f9acb;border-radius:0.8px"></div>
<svg class="a" style="left:0;top:0;overflow:visible" width="1" height="1"><path d="M330.30000000000007 165.34499999999997 h4.8 v0.9 h-4.8z M332.70000000000005 164.74499999999998 l2.4 -2.4 h-4.8z" fill="#1e2a4a"/></svg>
<div class="a" style="left:0;top:168.74499999999998px;width:338px;height:9.4px;background:#6f94c8"></div>
<div class="a" style="left:0;top:168.74499999999998px;width:262.6px;height:9.4px;background:linear-gradient(#e6effb,#cfe0f7 50%,#b9d1f2);border-top:0.5px solid #8ea6cc"></div>
<div class="a" style="left:319.6px;top:168.74499999999998px;width:8px;height:9.4px;background:linear-gradient(#e6effb,#b9d1f2)"></div>
<div class="a" style="left:327.6px;top:168.74499999999998px;width:10.4px;height:9.4px;background:#7b9cd4"></div>
<svg class="a" style="left:0;top:168.74499999999998px" width="338" height="9.4" viewBox="0 0 338 9.4"><path d="M3 4.7 l2.6 -2.4 v4.8z M325 4.7 l-2.6 -2.4 v4.8z" fill="#1e2a4a"/></svg>
</div>
<div class="a" style="left:145.4px;top:219.6px;width:654.6px;height:215.4px;background:#ece9d8"></div>
<div class="a" style="left:146.4px;top:219.8px;width:215.6px;height:11.4px;background:#efecdf;border:0.7px solid #fff;border-right:0.8px solid #55534a;border-bottom:none"></div>
<div class="a" style="left:362px;top:220.2px;width:217.8px;height:10.8px;background:#eeebdc;border-left:0.9px solid #3c3a34;border-bottom:0.9px solid #4a4840"></div>
<div class="a" style="left:579.8px;top:220.2px;width:217px;height:10.8px;background:#eeebdc;border-left:0.9px solid #3c3a34;border-bottom:0.9px solid #4a4840;border-right:0.9px solid #6a685c"></div>
<div class="t" style="left:245.6px;top:222.2px;font-size:7px;font-weight:bold">动作</div>
<div class="t" style="left:464.6px;top:223.2px;font-size:6.7px">特效</div>
<div class="t" style="left:681.6px;top:223.2px;font-size:6.7px">特效</div>
<div class="a" style="left:145.4px;top:219.6px;width:1px;height:215.4px;background:#fff"></div>
<div class="a" style="left:796.6px;top:231px;width:0.9px;height:204px;background:#8a887a"></div>
<div class="btn" style="left:153.8px;top:233px;width:33.8px;height:10px;line-height:9.2px">修正</div>
<div class="btn" style="left:193px;top:233px;width:25.8px;height:10px;line-height:9.2px">测试</div>
<div class="btn" style="left:219px;top:233px;width:29.8px;height:10px;line-height:9.2px">暂停</div>
<div class="btn" style="left:257.4px;top:233px;width:47.6px;height:10px;line-height:9.2px">自定义姿态</div>
<div class="btn" style="left:310px;top:233px;width:37px;height:10px;line-height:9.2px">导入姿态</div>
<div class="t" style="left:398px;top:237.6px;font-size:6.6px;color:#111">动作</div>
<div class="t" style="left:417.6px;top:237.2px;font-size:7px;transform:scaleX(.885);transform-origin:0 0;color:#111">1</div>
<div class="t" style="left:426px;top:237.6px;font-size:6.6px;color:#111">帧</div>
<div class="t" style="left:435px;top:237.2px;font-size:7px;transform:scaleX(.885);transform-origin:0 0;color:#111">19</div>
<div class="t" style="left:453.8px;top:237.6px;font-size:6.6px;color:#111">时间</div>
<div class="t" style="left:473.6px;top:237.2px;font-size:7px;transform:scaleX(.885);transform-origin:0 0;color:#111">00:00:01.900</div>
<div class="t" style="left:520px;top:237.6px;font-size:6.6px;color:#111">行程</div>
<div class="t" style="left:533.4px;top:237.2px;font-size:7px;transform:scaleX(.885);transform-origin:0 0;color:#111">246.590909</div>
<div class="a" style="left:149.8px;top:248.6px;width:642.8px;height:168px;background:#a6e83a"></div>
<div class="a" style="left:149.8px;top:416.4px;width:642.2px;height:16.4px;background:#ff7f0a"></div>
<div class="a" style="left:164.6px;top:258.6px;width:622.8px;height:154.39999999999998px;background:#fff;border-left:0.8px solid #222;border-top:0.8px solid #444"></div>
<div class="a" style="left:182.6px;top:248.6px;width:14.4px;height:9.8px;background:#ff1414;color:#fff;font-size:6.6px;text-align:center;line-height:9.8px">1</div>
<div class="a" style="left:201.8px;top:248.6px;width:14.2px;height:9.8px;background:#0a4410;color:#fff;font-size:6.6px;text-align:center;line-height:9.8px">2</div>
<div class="a" style="left:220.2px;top:248.6px;width:14.6px;height:9.8px;background:#0a4410;color:#fff;font-size:6.6px;text-align:center;line-height:9.8px">3</div>
<div class="a" style="left:300px;top:248.8px;width:13px;height:9.4px;background:#eef0f4;border:0.5px solid #fff;border-right-color:#666;border-bottom-color:#666"></div>
<div class="a" style="left:319px;top:248.8px;width:13px;height:9.4px;background:#eef0f4;border:0.5px solid #fff;border-right-color:#666;border-bottom-color:#666"></div>
<svg class="a" style="left:300px;top:248.8px" width="13" height="9.4" viewBox="0 0 13 9.4"><path d="M4.2 3.4 h3.6 q1.6 0.2 1.4 2.2 l-1.4 2.2" fill="none" stroke="#2a5ad0" stroke-width="1.3"/><path d="M5 1.4 L2.6 3.5 L5 5.6z" fill="#2a5ad0"/></svg>
<svg class="a" style="left:319px;top:248.8px" width="13" height="9.4" viewBox="0 0 13 9.4"><path d="M8.8 3.4 h-3.6 q-1.6 0.2 -1.4 2.2 l1.4 2.2" fill="none" stroke="#1a3ac0" stroke-width="1.4"/><path d="M8 1.4 L10.4 3.5 L8 5.6z" fill="#1a3ac0"/></svg>
<div class="btn" style="left:351px;top:248.8px;width:14.2px;height:9.2px;line-height:8.4px;font-size:6.2px">1</div>
<div class="a" style="left:379.2px;top:248.8px;width:24.4px;height:9px;background:#ece9d8"></div>
<div class="radio" style="left:380.59999999999997px;top:250.2px"></div>
<div class="a" style="left:382.59999999999997px;top:252.2px;width:2px;height:2px;border-radius:50%;background:#111"></div>
<div class="t" style="left:389.59999999999997px;top:250.2px;font-size:6.5px">3轴</div>
<div class="a" style="left:407px;top:248.8px;width:25px;height:9px;background:#ece9d8"></div>
<div class="radio" style="left:408.4px;top:250.2px"></div>
<div class="t" style="left:417.4px;top:250.2px;font-size:6.5px">6轴</div>
<div class="a" style="left:510.4px;top:248.8px;width:26.4px;height:9px;background:#ece9d8"></div>
<div class="radio" style="left:511.79999999999995px;top:250.2px"></div>
<div class="t" style="left:520.8px;top:250.2px;font-size:6.5px">显示</div>
<div class="a" style="left:543.6px;top:248.8px;width:28px;height:9px;background:#ece9d8"></div>
<div class="radio" style="left:545.0px;top:250.2px"></div>
<div class="t" style="left:554.0px;top:250.2px;font-size:6.5px">隐藏</div>
<div class="t" style="left:446px;top:249.8px;font-weight:bold;font-size:9.6px;color:#10109a;letter-spacing:0.1px">动作波形编</div>
<div class="btn" style="left:585.4px;top:248.8px;width:28.6px;height:9.2px;line-height:8.2px;font-size:6.5px">首页</div>
<div class="btn" style="left:619.6px;top:248.8px;width:27.4px;height:9.2px;line-height:8.2px;font-size:6.5px">下一页</div>
<div class="btn" style="left:652px;top:248.8px;width:28.4px;height:9.2px;line-height:8.2px;font-size:6.5px">上一页</div>
<div class="btn" style="left:684.6px;top:248.8px;width:27.6px;height:9.2px;line-height:8.2px;font-size:6.5px">末页</div>
<div class="btn" style="left:760.2px;top:248.8px;width:23.0px;height:9.2px;line-height:8.2px;font-size:6.5px">定位</div>
<div class="a" style="left:726px;top:248.2px;width:28.6px;height:10px;background:#fff;border:0.7px solid #444;border-right-color:#ccc;border-bottom-color:#ccc"></div>
<svg class="a" style="left:164.6px;top:258.6px" width="622.8" height="154.4" viewBox="0 0 622.8 154.4"><path d="M0 12.87 H622.8 M0 25.73 H622.8 M0 38.6 H622.8 M0 51.47 H622.8 M0 64.33 H622.8 M0 77.2 H622.8 M0 90.07 H622.8 M0 102.93 H622.8 M0 115.8 H622.8 M0 128.67 H622.8 M0 141.53 H622.8 M13.09 0 V154.4 M25.79 0 V154.4 M38.48 0 V154.4 M51.18 0 V154.4 M63.87 0 V154.4 M76.56 0 V154.4 M89.26 0 V154.4 M101.95 0 V154.4 M114.64 0 V154.4 M127.34 0 V154.4 M140.03 0 V154.4 M152.73 0 V154.4 M165.42 0 V154.4 M178.11 0 V154.4 M190.81 0 V154.4 M203.5 0 V154.4 M216.2 0 V154.4 M228.89 0 V154.4 M241.58 0 V154.4 M254.28 0 V154.4 M266.97 0 V154.4 M279.67 0 V154.4 M292.36 0 V154.4 M305.05 0 V154.4 M317.75 0 V154.4 M330.44 0 V154.4 M343.13 0 V154.4 M355.83 0 V154.4 M368.52 0 V154.4 M381.22 0 V154.4 M393.91 0 V154.4 M406.6 0 V154.4 M419.3 0 V154.4 M431.99 0 V154.4 M444.69 0 V154.4 M457.38 0 V154.4 M470.07 0 V154.4 M482.77 0 V154.4 M495.46 0 V154.4 M508.16 0 V154.4 M520.85 0 V154.4 M533.54 0 V154.4 M546.24 0 V154.4 M558.93 0 V154.4 M571.62 0 V154.4 M584.32 0 V154.4 M597.01 0 V154.4 M609.71 0 V154.4 M622.4 0 V154.4" stroke="#1c1c1c" stroke-width="1.15" stroke-dasharray="1.3 2" fill="none"/><path d="M328.14 154.4 a2.3 2.4 0 0 1 4.6 0z" fill="#8c8c8c"/><path d="M340.83 154.4 a2.3 2.4 0 0 1 4.6 0z" fill="#8c8c8c"/><path d="M353.53 154.4 a2.3 2.4 0 0 1 4.6 0z" fill="#8c8c8c"/><path d="M366.22 154.4 a2.3 2.4 0 0 1 4.6 0z" fill="#8c8c8c"/><path d="M378.92 154.4 a2.3 2.4 0 0 1 4.6 0z" fill="#8c8c8c"/><path d="M391.61 154.4 a2.3 2.4 0 0 1 4.6 0z" fill="#8c8c8c"/><path d="M404.3 154.4 a2.3 2.4 0 0 1 4.6 0z" fill="#8c8c8c"/><path d="M417.0 154.4 a2.3 2.4 0 0 1 4.6 0z" fill="#8c8c8c"/><path d="M429.69 154.4 a2.3 2.4 0 0 1 4.6 0z" fill="#8c8c8c"/><path d="M442.39 154.4 a2.3 2.4 0 0 1 4.6 0z" fill="#8c8c8c"/><path d="M455.08 154.4 a2.3 2.4 0 0 1 4.6 0z" fill="#8c8c8c"/><path d="M467.77 154.4 a2.3 2.4 0 0 1 4.6 0z" fill="#8c8c8c"/><path d="M480.47 154.4 a2.3 2.4 0 0 1 4.6 0z" fill="#8c8c8c"/><path d="M493.16 154.4 a2.3 2.4 0 0 1 4.6 0z" fill="#8c8c8c"/><path d="M505.86 154.4 a2.3 2.4 0 0 1 4.6 0z" fill="#8c8c8c"/><path d="M518.55 154.4 a2.3 2.4 0 0 1 4.6 0z" fill="#8c8c8c"/><path d="M531.24 154.4 a2.3 2.4 0 0 1 4.6 0z" fill="#8c8c8c"/><path d="M543.94 154.4 a2.3 2.4 0 0 1 4.6 0z" fill="#8c8c8c"/><path d="M556.63 154.4 a2.3 2.4 0 0 1 4.6 0z" fill="#8c8c8c"/><path d="M569.32 154.4 a2.3 2.4 0 0 1 4.6 0z" fill="#8c8c8c"/><path d="M582.02 154.4 a2.3 2.4 0 0 1 4.6 0z" fill="#8c8c8c"/><path d="M594.71 154.4 a2.3 2.4 0 0 1 4.6 0z" fill="#8c8c8c"/><path d="M607.41 154.4 a2.3 2.4 0 0 1 4.6 0z" fill="#8c8c8c"/><path d="M620.1 154.4 a2.3 2.4 0 0 1 4.6 0z" fill="#8c8c8c"/><polyline points="0.4,154.4 13.09,154.4 25.79,154.4 38.48,154.4 51.18,154.4 63.87,154.4 76.56,154.4 89.26,154.4 101.95,154.4 114.64,154.4 127.34,154.4 140.03,154.4 152.73,154.4 165.42,154.4 178.11,154.4 190.81,154.4 203.5,154.4 216.2,154.4 228.89,154.4 241.58,154.4 254.28,154.4 266.97,154.4 279.67,154.4 292.36,154.4 305.05,154.4 317.75,154.4 330.44,140.76 343.13,114.77 355.83,76.69 368.52,32.17 381.22,23.42 393.91,23.42 406.6,23.42 419.3,23.42 431.99,23.42 444.69,23.42 457.38,23.42 470.07,23.42 482.77,23.42 495.46,23.42 508.16,23.42 520.85,23.42 533.54,23.42 546.24,23.42 558.93,23.42 571.62,23.42 584.32,23.42 597.01,23.42 609.71,23.42 622.4,23.42" fill="none" stroke="#4a4aa6" stroke-width="1"/><path d="M-2.1 154.4 a2.5 2.6 0 0 1 5 0z" fill="#0808c8"/><path d="M10.59 154.4 a2.5 2.6 0 0 1 5 0z" fill="#0808c8"/><path d="M23.29 154.4 a2.5 2.6 0 0 1 5 0z" fill="#0808c8"/><path d="M35.98 154.4 a2.5 2.6 0 0 1 5 0z" fill="#0808c8"/><path d="M48.68 154.4 a2.5 2.6 0 0 1 5 0z" fill="#0808c8"/><path d="M61.37 154.4 a2.5 2.6 0 0 1 5 0z" fill="#0808c8"/><path d="M74.06 154.4 a2.5 2.6 0 0 1 5 0z" fill="#0808c8"/><path d="M86.76 154.4 a2.5 2.6 0 0 1 5 0z" fill="#0808c8"/><path d="M99.45 154.4 a2.5 2.6 0 0 1 5 0z" fill="#0808c8"/><path d="M112.14 154.4 a2.5 2.6 0 0 1 5 0z" fill="#0808c8"/><path d="M124.84 154.4 a2.5 2.6 0 0 1 5 0z" fill="#0808c8"/><path d="M137.53 154.4 a2.5 2.6 0 0 1 5 0z" fill="#0808c8"/><path d="M150.23 154.4 a2.5 2.6 0 0 1 5 0z" fill="#0808c8"/><path d="M162.92 154.4 a2.5 2.6 0 0 1 5 0z" fill="#0808c8"/><path d="M175.61 154.4 a2.5 2.6 0 0 1 5 0z" fill="#0808c8"/><path d="M188.31 154.4 a2.5 2.6 0 0 1 5 0z" fill="#0808c8"/><path d="M201.0 154.4 a2.5 2.6 0 0 1 5 0z" fill="#0808c8"/><path d="M213.7 154.4 a2.5 2.6 0 0 1 5 0z" fill="#0808c8"/><path d="M226.39 154.4 a2.5 2.6 0 0 1 5 0z" fill="#0808c8"/><path d="M239.08 154.4 a2.5 2.6 0 0 1 5 0z" fill="#0808c8"/><path d="M251.78 154.4 a2.5 2.6 0 0 1 5 0z" fill="#0808c8"/><path d="M264.47 154.4 a2.5 2.6 0 0 1 5 0z" fill="#0808c8"/><path d="M277.17 154.4 a2.5 2.6 0 0 1 5 0z" fill="#0808c8"/><path d="M289.86 154.4 a2.5 2.6 0 0 1 5 0z" fill="#0808c8"/><path d="M302.55 154.4 a2.5 2.6 0 0 1 5 0z" fill="#0808c8"/><path d="M315.25 154.4 a2.5 2.6 0 0 1 5 0z" fill="#0808c8"/><rect x="328.34" y="138.66" width="4.2" height="4.2" fill="#0a0af0" stroke="#0000a8" stroke-width="0.4"/><rect x="341.03" y="112.67" width="4.2" height="4.2" fill="#0a0af0" stroke="#0000a8" stroke-width="0.4"/><rect x="353.73" y="74.59" width="4.2" height="4.2" fill="#0a0af0" stroke="#0000a8" stroke-width="0.4"/><rect x="366.42" y="30.07" width="4.2" height="4.2" fill="#0a0af0" stroke="#0000a8" stroke-width="0.4"/><rect x="379.12" y="21.32" width="4.2" height="4.2" fill="#0a0af0" stroke="#0000a8" stroke-width="0.4"/><rect x="391.81" y="21.32" width="4.2" height="4.2" fill="#0a0af0" stroke="#0000a8" stroke-width="0.4"/><rect x="404.5" y="21.32" width="4.2" height="4.2" fill="#0a0af0" stroke="#0000a8" stroke-width="0.4"/><rect x="417.2" y="21.32" width="4.2" height="4.2" fill="#0a0af0" stroke="#0000a8" stroke-width="0.4"/><rect x="429.89" y="21.32" width="4.2" height="4.2" fill="#0a0af0" stroke="#0000a8" stroke-width="0.4"/><rect x="442.59" y="21.32" width="4.2" height="4.2" fill="#0a0af0" stroke="#0000a8" stroke-width="0.4"/><rect x="455.28" y="21.32" width="4.2" height="4.2" fill="#0a0af0" stroke="#0000a8" stroke-width="0.4"/><rect x="467.97" y="21.32" width="4.2" height="4.2" fill="#0a0af0" stroke="#0000a8" stroke-width="0.4"/><rect x="480.67" y="21.32" width="4.2" height="4.2" fill="#0a0af0" stroke="#0000a8" stroke-width="0.4"/><rect x="493.36" y="21.32" width="4.2" height="4.2" fill="#0a0af0" stroke="#0000a8" stroke-width="0.4"/><rect x="506.06" y="21.32" width="4.2" height="4.2" fill="#0a0af0" stroke="#0000a8" stroke-width="0.4"/><rect x="518.75" y="21.32" width="4.2" height="4.2" fill="#0a0af0" stroke="#0000a8" stroke-width="0.4"/><rect x="531.44" y="21.32" width="4.2" height="4.2" fill="#0a0af0" stroke="#0000a8" stroke-width="0.4"/><rect x="544.14" y="21.32" width="4.2" height="4.2" fill="#0a0af0" stroke="#0000a8" stroke-width="0.4"/><rect x="556.83" y="21.32" width="4.2" height="4.2" fill="#0a0af0" stroke="#0000a8" stroke-width="0.4"/><rect x="569.52" y="21.32" width="4.2" height="4.2" fill="#0a0af0" stroke="#0000a8" stroke-width="0.4"/><rect x="582.22" y="21.32" width="4.2" height="4.2" fill="#0a0af0" stroke="#0000a8" stroke-width="0.4"/><rect x="594.91" y="21.32" width="4.2" height="4.2" fill="#0a0af0" stroke="#0000a8" stroke-width="0.4"/><rect x="607.61" y="21.32" width="4.2" height="4.2" fill="#0a0af0" stroke="#0000a8" stroke-width="0.4"/><rect x="620.3" y="21.32" width="4.2" height="4.2" fill="#0a0af0" stroke="#0000a8" stroke-width="0.4"/></svg>
<div class="a" style="left:164.6px;top:412.8px;width:623.4px;height:0.9px;background:#8c8c80"></div>
<div class="t" style="left:152.8px;top:256.7px;font-size:6.9px;transform:scaleX(.85);transform-origin:0 0;color:#000">300</div>
<div class="t" style="left:152.8px;top:269.57px;font-size:6.9px;transform:scaleX(.85);transform-origin:0 0;color:#000">275</div>
<div class="t" style="left:152.8px;top:282.43px;font-size:6.9px;transform:scaleX(.85);transform-origin:0 0;color:#000">250</div>
<div class="t" style="left:152.8px;top:295.3px;font-size:6.9px;transform:scaleX(.85);transform-origin:0 0;color:#000">225</div>
<div class="t" style="left:152.8px;top:308.17px;font-size:6.9px;transform:scaleX(.85);transform-origin:0 0;color:#000">200</div>
<div class="t" style="left:152.8px;top:321.03px;font-size:6.9px;transform:scaleX(.85);transform-origin:0 0;color:#000">175</div>
<div class="t" style="left:152.8px;top:333.9px;font-size:6.9px;transform:scaleX(.85);transform-origin:0 0;color:#000">150</div>
<div class="t" style="left:152.8px;top:346.77px;font-size:6.9px;transform:scaleX(.85);transform-origin:0 0;color:#000">125</div>
<div class="t" style="left:152.8px;top:359.63px;font-size:6.9px;transform:scaleX(.85);transform-origin:0 0;color:#000">100</div>
<div class="t" style="left:152.8px;top:372.5px;font-size:6.9px;transform:scaleX(.85);transform-origin:0 0;color:#000">75</div>
<div class="t" style="left:152.8px;top:385.37px;font-size:6.9px;transform:scaleX(.85);transform-origin:0 0;color:#000">50</div>
<div class="t" style="left:152.8px;top:398.23px;font-size:6.9px;transform:scaleX(.85);transform-origin:0 0;color:#000">25</div>
<div class="t" style="left:152.8px;top:411.1px;font-size:6.9px;transform:scaleX(.85);transform-origin:0 0;color:#000">0</div>
<div class="t" style="left:162.4px;top:433.4px;font-size:7px;color:#000;-webkit-text-stroke:0.15px #000;transform-origin:0 0;transform:rotate(-90deg) scaleX(.85)">1</div>
<div class="t" style="left:175.09px;top:433.4px;font-size:7px;color:#000;-webkit-text-stroke:0.15px #000;transform-origin:0 0;transform:rotate(-90deg) scaleX(.85)">2</div>
<div class="t" style="left:187.79px;top:433.4px;font-size:7px;color:#000;-webkit-text-stroke:0.15px #000;transform-origin:0 0;transform:rotate(-90deg) scaleX(.85)">3</div>
<div class="t" style="left:200.48px;top:433.4px;font-size:7px;color:#000;-webkit-text-stroke:0.15px #000;transform-origin:0 0;transform:rotate(-90deg) scaleX(.85)">4</div>
<div class="t" style="left:213.18px;top:433.4px;font-size:7px;color:#000;-webkit-text-stroke:0.15px #000;transform-origin:0 0;transform:rotate(-90deg) scaleX(.85)">5</div>
<div class="t" style="left:225.87px;top:433.4px;font-size:7px;color:#000;-webkit-text-stroke:0.15px #000;transform-origin:0 0;transform:rotate(-90deg) scaleX(.85)">6</div>
<div class="t" style="left:238.56px;top:433.4px;font-size:7px;color:#000;-webkit-text-stroke:0.15px #000;transform-origin:0 0;transform:rotate(-90deg) scaleX(.85)">7</div>
<div class="t" style="left:251.26px;top:433.4px;font-size:7px;color:#000;-webkit-text-stroke:0.15px #000;transform-origin:0 0;transform:rotate(-90deg) scaleX(.85)">8</div>
<div class="t" style="left:263.95px;top:433.4px;font-size:7px;color:#000;-webkit-text-stroke:0.15px #000;transform-origin:0 0;transform:rotate(-90deg) scaleX(.85)">9</div>
<div class="t" style="left:276.64px;top:433.4px;font-size:7px;color:#000;-webkit-text-stroke:0.15px #000;transform-origin:0 0;transform:rotate(-90deg) scaleX(.85)">10</div>
<div class="t" style="left:289.34px;top:433.4px;font-size:7px;color:#000;-webkit-text-stroke:0.15px #000;transform-origin:0 0;transform:rotate(-90deg) scaleX(.85)">11</div>
<div class="t" style="left:302.03px;top:433.4px;font-size:7px;color:#000;-webkit-text-stroke:0.15px #000;transform-origin:0 0;transform:rotate(-90deg) scaleX(.85)">12</div>
<div class="t" style="left:314.73px;top:433.4px;font-size:7px;color:#000;-webkit-text-stroke:0.15px #000;transform-origin:0 0;transform:rotate(-90deg) scaleX(.85)">13</div>
<div class="t" style="left:327.42px;top:433.4px;font-size:7px;color:#000;-webkit-text-stroke:0.15px #000;transform-origin:0 0;transform:rotate(-90deg) scaleX(.85)">14</div>
<div class="t" style="left:340.11px;top:433.4px;font-size:7px;color:#000;-webkit-text-stroke:0.15px #000;transform-origin:0 0;transform:rotate(-90deg) scaleX(.85)">15</div>
<div class="t" style="left:352.81px;top:433.4px;font-size:7px;color:#000;-webkit-text-stroke:0.15px #000;transform-origin:0 0;transform:rotate(-90deg) scaleX(.85)">16</div>
<div class="t" style="left:365.5px;top:433.4px;font-size:7px;color:#000;-webkit-text-stroke:0.15px #000;transform-origin:0 0;transform:rotate(-90deg) scaleX(.85)">17</div>
<div class="t" style="left:378.2px;top:433.4px;font-size:7px;color:#000;-webkit-text-stroke:0.15px #000;transform-origin:0 0;transform:rotate(-90deg) scaleX(.85)">18</div>
<div class="t" style="left:390.89px;top:433.4px;font-size:7px;color:#000;-webkit-text-stroke:0.15px #000;transform-origin:0 0;transform:rotate(-90deg) scaleX(.85)">19</div>
<div class="t" style="left:403.58px;top:433.4px;font-size:7px;color:#000;-webkit-text-stroke:0.15px #000;transform-origin:0 0;transform:rotate(-90deg) scaleX(.85)">20</div>
<div class="t" style="left:416.28px;top:433.4px;font-size:7px;color:#000;-webkit-text-stroke:0.15px #000;transform-origin:0 0;transform:rotate(-90deg) scaleX(.85)">21</div>
<div class="t" style="left:428.97px;top:433.4px;font-size:7px;color:#000;-webkit-text-stroke:0.15px #000;transform-origin:0 0;transform:rotate(-90deg) scaleX(.85)">22</div>
<div class="t" style="left:441.67px;top:433.4px;font-size:7px;color:#000;-webkit-text-stroke:0.15px #000;transform-origin:0 0;transform:rotate(-90deg) scaleX(.85)">23</div>
<div class="t" style="left:454.36px;top:433.4px;font-size:7px;color:#000;-webkit-text-stroke:0.15px #000;transform-origin:0 0;transform:rotate(-90deg) scaleX(.85)">24</div>
<div class="t" style="left:467.05px;top:433.4px;font-size:7px;color:#000;-webkit-text-stroke:0.15px #000;transform-origin:0 0;transform:rotate(-90deg) scaleX(.85)">25</div>
<div class="t" style="left:479.75px;top:433.4px;font-size:7px;color:#000;-webkit-text-stroke:0.15px #000;transform-origin:0 0;transform:rotate(-90deg) scaleX(.85)">26</div>
<div class="t" style="left:492.44px;top:433.4px;font-size:7px;color:#000;-webkit-text-stroke:0.15px #000;transform-origin:0 0;transform:rotate(-90deg) scaleX(.85)">27</div>
<div class="t" style="left:505.13px;top:433.4px;font-size:7px;color:#000;-webkit-text-stroke:0.15px #000;transform-origin:0 0;transform:rotate(-90deg) scaleX(.85)">28</div>
<div class="t" style="left:517.83px;top:433.4px;font-size:7px;color:#000;-webkit-text-stroke:0.15px #000;transform-origin:0 0;transform:rotate(-90deg) scaleX(.85)">29</div>
<div class="t" style="left:530.52px;top:433.4px;font-size:7px;color:#000;-webkit-text-stroke:0.15px #000;transform-origin:0 0;transform:rotate(-90deg) scaleX(.85)">30</div>
<div class="t" style="left:543.22px;top:433.4px;font-size:7px;color:#000;-webkit-text-stroke:0.15px #000;transform-origin:0 0;transform:rotate(-90deg) scaleX(.85)">31</div>
<div class="t" style="left:555.91px;top:433.4px;font-size:7px;color:#000;-webkit-text-stroke:0.15px #000;transform-origin:0 0;transform:rotate(-90deg) scaleX(.85)">32</div>
<div class="t" style="left:568.6px;top:433.4px;font-size:7px;color:#000;-webkit-text-stroke:0.15px #000;transform-origin:0 0;transform:rotate(-90deg) scaleX(.85)">33</div>
<div class="t" style="left:581.3px;top:433.4px;font-size:7px;color:#000;-webkit-text-stroke:0.15px #000;transform-origin:0 0;transform:rotate(-90deg) scaleX(.85)">34</div>
<div class="t" style="left:593.99px;top:433.4px;font-size:7px;color:#000;-webkit-text-stroke:0.15px #000;transform-origin:0 0;transform:rotate(-90deg) scaleX(.85)">35</div>
<div class="t" style="left:606.69px;top:433.4px;font-size:7px;color:#000;-webkit-text-stroke:0.15px #000;transform-origin:0 0;transform:rotate(-90deg) scaleX(.85)">36</div>
<div class="t" style="left:619.38px;top:433.4px;font-size:7px;color:#000;-webkit-text-stroke:0.15px #000;transform-origin:0 0;transform:rotate(-90deg) scaleX(.85)">37</div>
<div class="t" style="left:632.07px;top:433.4px;font-size:7px;color:#000;-webkit-text-stroke:0.15px #000;transform-origin:0 0;transform:rotate(-90deg) scaleX(.85)">38</div>
<div class="t" style="left:644.77px;top:433.4px;font-size:7px;color:#000;-webkit-text-stroke:0.15px #000;transform-origin:0 0;transform:rotate(-90deg) scaleX(.85)">39</div>
<div class="t" style="left:657.46px;top:433.4px;font-size:7px;color:#000;-webkit-text-stroke:0.15px #000;transform-origin:0 0;transform:rotate(-90deg) scaleX(.85)">40</div>
<div class="t" style="left:670.16px;top:433.4px;font-size:7px;color:#000;-webkit-text-stroke:0.15px #000;transform-origin:0 0;transform:rotate(-90deg) scaleX(.85)">41</div>
<div class="t" style="left:682.85px;top:433.4px;font-size:7px;color:#000;-webkit-text-stroke:0.15px #000;transform-origin:0 0;transform:rotate(-90deg) scaleX(.85)">42</div>
<div class="t" style="left:695.54px;top:433.4px;font-size:7px;color:#000;-webkit-text-stroke:0.15px #000;transform-origin:0 0;transform:rotate(-90deg) scaleX(.85)">43</div>
<div class="t" style="left:708.24px;top:433.4px;font-size:7px;color:#000;-webkit-text-stroke:0.15px #000;transform-origin:0 0;transform:rotate(-90deg) scaleX(.85)">44</div>
<div class="t" style="left:720.93px;top:433.4px;font-size:7px;color:#000;-webkit-text-stroke:0.15px #000;transform-origin:0 0;transform:rotate(-90deg) scaleX(.85)">45</div>
<div class="t" style="left:733.62px;top:433.4px;font-size:7px;color:#000;-webkit-text-stroke:0.15px #000;transform-origin:0 0;transform:rotate(-90deg) scaleX(.85)">46</div>
<div class="t" style="left:746.32px;top:433.4px;font-size:7px;color:#000;-webkit-text-stroke:0.15px #000;transform-origin:0 0;transform:rotate(-90deg) scaleX(.85)">47</div>
<div class="t" style="left:759.01px;top:433.4px;font-size:7px;color:#000;-webkit-text-stroke:0.15px #000;transform-origin:0 0;transform:rotate(-90deg) scaleX(.85)">48</div>
<div class="t" style="left:771.71px;top:433.4px;font-size:7px;color:#000;-webkit-text-stroke:0.15px #000;transform-origin:0 0;transform:rotate(-90deg) scaleX(.85)">49</div>
<div class="t" style="left:784.4px;top:433.4px;font-size:7px;color:#000;-webkit-text-stroke:0.15px #000;transform-origin:0 0;transform:rotate(-90deg) scaleX(.85)">50</div>
<div class="a" style="left:0;top:432.6px;width:800px;height:2.4px;background:#3a7ae6"></div>
<div class="a" style="left:0;top:432.6px;width:55px;height:2.4px;background:#4aa846"></div>
<div class="a" style="left:702px;top:432.6px;width:98px;height:2.4px;background:#1e9ce8"></div>
</body></html>
